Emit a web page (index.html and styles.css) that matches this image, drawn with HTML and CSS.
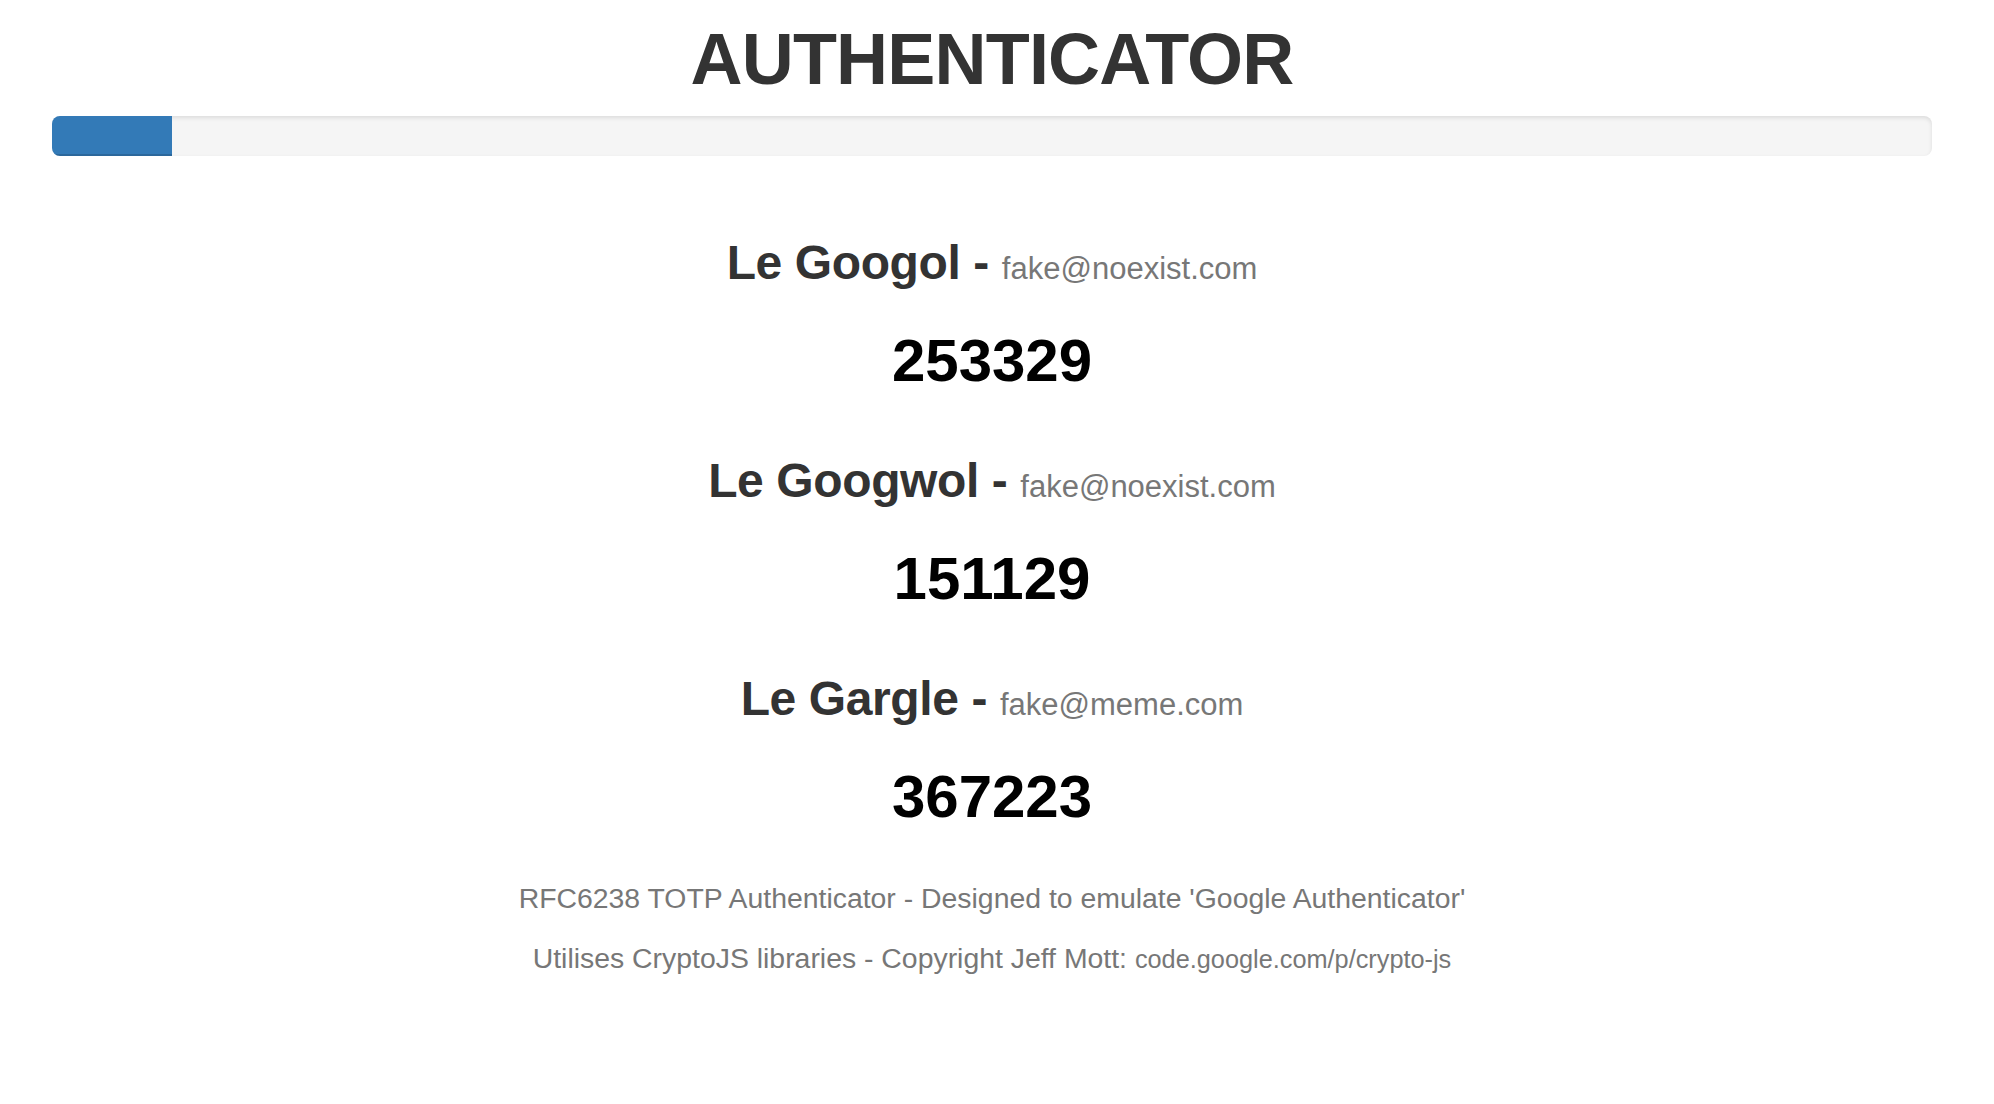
FILE: index.html
```html
<!DOCTYPE html>
<html lang="en">
<head>
<meta charset="utf-8">
<title>Authenticator</title>
<link rel="stylesheet" href="styles.css">
</head>
<body>
<div class="page">
  <h1 class="title">AUTHENTICATOR</h1>
  <div class="progress"><div class="progress-bar" style="width: 120px"></div></div>
  <div class="accounts">
    <div class="entry">
      <h3 class="name">Le Googol - <small class="email">fake@noexist.com</small></h3>
      <h2 class="code">253329</h2>
    </div>
    <div class="entry">
      <h3 class="name">Le Googwol - <small class="email">fake@noexist.com</small></h3>
      <h2 class="code">151129</h2>
    </div>
    <div class="entry">
      <h3 class="name">Le Gargle - <small class="email">fake@meme.com</small></h3>
      <h2 class="code">367223</h2>
    </div>
  </div>
  <div class="footer">
    <p class="note">RFC6238 TOTP Authenticator - Designed to emulate 'Google Authenticator'</p>
    <p class="note">Utilises CryptoJS libraries - Copyright Jeff Mott: <span class="link">code.google.com/p/crypto-js</span></p>
  </div>
</div>
</body>
</html>
```
FILE: styles.css
```css
html, body {
  margin: 0;
  padding: 0;
  background: #ffffff;
}
body {
  font-family: "Liberation Sans", Arial, Helvetica, sans-serif;
  color: #333333;
}
.page {
  padding: 19px 62px 0 52px;
  text-align: center;
}
.title {
  margin: 0;
  font-size: 72px;
  line-height: 80px;
  font-weight: 700;
  letter-spacing: -0.8px;
  color: #333333;
}
.progress {
  margin-top: 17px;
  height: 40px;
  background: #f5f5f5;
  border-radius: 8px;
  overflow: hidden;
  box-shadow: inset 0 2px 4px rgba(0, 0, 0, 0.1);
  display: flex;
}
.progress-bar {
  height: 100%;
  background: #337ab7;
  box-shadow: inset 0 -2px 0 rgba(0, 0, 0, 0.15);
}
.accounts {
  margin-top: 79px;
  display: flex;
  flex-direction: column;
  gap: 59px;
}
.entry {
  display: flex;
  flex-direction: column;
  gap: 37px;
}
.name {
  margin: 0;
  font-size: 48px;
  line-height: 56px;
  font-weight: 700;
  letter-spacing: -0.4px;
  color: #333333;
}
.email {
  font-size: 31px;
  line-height: 1;
  font-weight: 400;
  letter-spacing: 0;
  color: #777777;
}
.code {
  margin: 0;
  font-size: 60px;
  line-height: 66px;
  font-weight: 700;
  color: #000000;
}
.footer {
  margin-top: 48px;
  display: flex;
  flex-direction: column;
  gap: 20px;
}
.note {
  margin: 0;
  font-size: 28.4px;
  line-height: 40px;
  color: #777777;
}
.link {
  font-size: 25.3px;
  line-height: 1;
}
```
